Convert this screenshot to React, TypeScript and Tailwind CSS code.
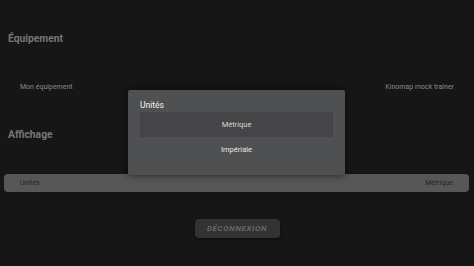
import React from "react";

export default function App() {
  return (
    <div className="relative h-[266px] w-[474px] overflow-hidden bg-[#161616] font-['Roboto',sans-serif]">
      <div className="flex flex-col">
        <h2 className="ml-[8px] mt-[32px] text-[10.3px] font-bold leading-[14px] text-[#767676]">Équipement</h2>
        <div className="mx-[20px] mt-[36px] flex items-center justify-between text-[7px] leading-[10px] text-[#8a8a8a]">
          <span>Mon équipement</span>
          <span>Kinomap mock trainer</span>
        </div>
        <h2 className="ml-[8px] mt-[36px] text-[10.3px] font-bold leading-[14px] text-[#767676]">Affichage</h2>
        <div className="ml-[4px] mt-[32px] flex h-[18px] w-[465px] items-center justify-between rounded-[4px] bg-[#575757] px-[16px] text-[7px] text-[#262626]">
          <span>Unités</span>
          <span>Métrique</span>
        </div>
        <div className="mt-[27px] flex justify-center">
          <button
            type="button"
            className="h-[19px] w-[85px] rounded-[4px] bg-[#333333] text-[8px] font-bold italic tracking-[0.08em] text-[#686868] shadow-[0_1px_3px_rgba(0,0,0,0.5)]"
          >
            DÉCONNEXION
          </button>
        </div>
      </div>

      <div className="absolute left-[128px] top-[90px] flex h-[85px] w-[217px] flex-col rounded-[2px] bg-[#4f5052] px-[12px] pt-[10px] shadow-[0_0_8px_rgba(0,0,0,0.6)]">
        <p className="text-[8.5px] leading-[11px] text-[#f0f0f0]">Unités</p>
        <div className="mt-[1px] flex h-[25px] items-center justify-center bg-[#454547] text-[7.5px] text-[#d6d6d6]">Métrique</div>
        <div className="flex h-[25px] items-center justify-center text-[7.5px] text-[#e6e6e6]">Impériale</div>
      </div>
    </div>
  );
}
